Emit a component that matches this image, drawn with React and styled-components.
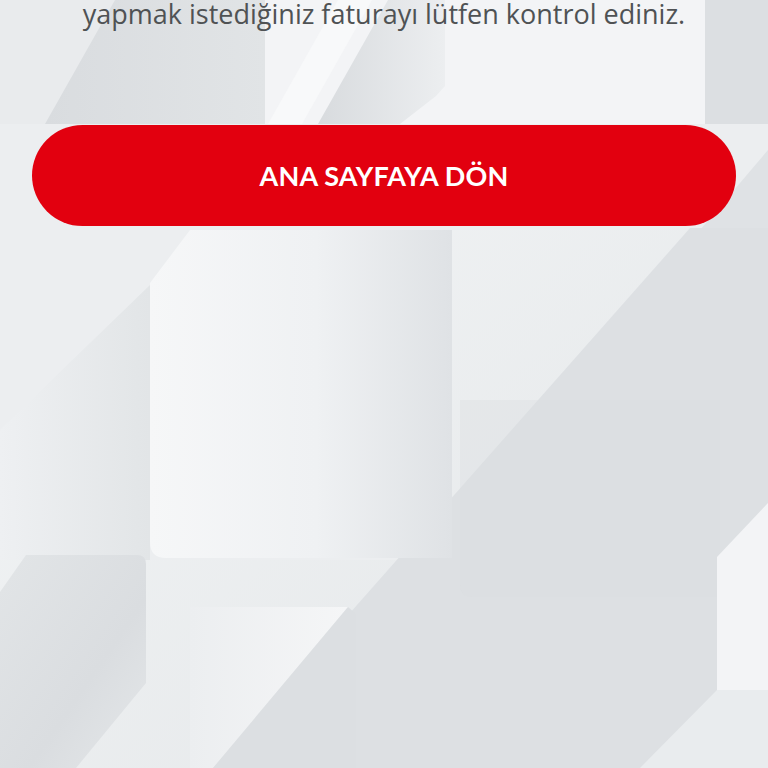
import React from "react";
import styled, { createGlobalStyle } from "styled-components";

const GlobalStyle = createGlobalStyle`
  html, body {
    margin: 0;
    padding: 0;
  }
  body {
    font-family: "Open Sans", "Liberation Sans", sans-serif;
    background: #eceef0;
  }
`;

const Page = styled.div`
  position: relative;
  min-height: 100vh;
  overflow: hidden;
  background: #eceef0;
`;

const Backdrop = styled.svg`
  position: absolute;
  inset: 0;
  width: 100%;
  height: 100%;
  z-index: 0;
`;

const Content = styled.main`
  position: relative;
  z-index: 1;
  display: flex;
  flex-direction: column;
  padding: 0 32px;
`;

const Message = styled.p`
  margin: 0;
  font-size: 27px;
  line-height: 27px;
  font-weight: 400;
  color: #4f5254;
  text-align: center;
`;

const HomeButton = styled.button`
  margin-top: 98px;
  height: 101px;
  width: 100%;
  border: none;
  border-radius: 51px;
  background: #e2000f;
  color: #ffffff;
  font-family: Lato, "Liberation Sans", sans-serif;
  font-weight: 700;
  font-size: 27px;
  letter-spacing: 0.2px;
  cursor: pointer;
`;

// decorative geometric backdrop
const Shapes = () => (
  <Backdrop viewBox="0 0 768 768" preserveAspectRatio="none">
    <defs>
      <linearGradient id="bigCard" x1="0" y1="0" x2="1" y2="0">
        <stop offset="0" stopColor="#f6f7f8" />
        <stop offset="0.55" stopColor="#eff1f3" />
        <stop offset="1" stopColor="#dfe2e5" />
      </linearGradient>
      <linearGradient id="topDark" x1="0" y1="0" x2="1" y2="0">
        <stop offset="0" stopColor="#d9dcdf" />
        <stop offset="1" stopColor="#e1e4e6" />
      </linearGradient>
      <linearGradient id="topMid" x1="0" y1="0" x2="1" y2="0">
        <stop offset="0" stopColor="#d8dbde" />
        <stop offset="1" stopColor="#eceef0" />
      </linearGradient>
      <linearGradient id="leftSlope" x1="0" y1="0" x2="1" y2="0">
        <stop offset="0" stopColor="#eef0f2" />
        <stop offset="1" stopColor="#e2e5e7" />
      </linearGradient>
      <linearGradient id="gapLight" x1="0" y1="0" x2="1" y2="1">
        <stop offset="0" stopColor="#f3f5f6" />
        <stop offset="1" stopColor="#e3e6e8" />
      </linearGradient>
      <linearGradient id="cornerCard" x1="0" y1="0" x2="1" y2="1">
        <stop offset="0" stopColor="#e2e5e7" />
        <stop offset="0.6" stopColor="#dadde0" />
        <stop offset="1" stopColor="#e4e7e9" />
      </linearGradient>
      <linearGradient id="lowCard" x1="0" y1="0" x2="1" y2="0">
        <stop offset="0" stopColor="#eceef0" />
        <stop offset="1" stopColor="#f5f6f7" />
      </linearGradient>
    </defs>

    {/* top band */}
    <rect x="0" y="0" width="265" height="124" fill="#e9ebed" />
    <polygon points="45,124 115,0 265,0 265,124" fill="url(#topDark)" />
    <rect x="265" y="0" width="440" height="124" fill="#f3f4f6" />
    <polygon points="318,124 388,0 445,0 445,86 436,96 400,124" fill="url(#topMid)" />
    <polygon points="268,124 338,0 372,0 302,124" fill="#f8f9fa" />
    <rect x="705" y="0" width="63" height="124" fill="#dcdfe2" />

    {/* around the button */}
    <rect x="0" y="124" width="768" height="106" fill="#eceef0" />
    <polygon points="700,230 768,150 768,230" fill="#dfe2e5" />

    {/* middle area */}
    <polygon points="0,430 150,285 150,560 0,560" fill="url(#leftSlope)" />
    <polygon points="452,230 690,228 213,768 0,768 0,560 452,560" fill="url(#gapLight)" />
    <polygon points="690,228 768,228 768,768 213,768" fill="#dde0e3" />
    <path d="M460 400 H720 V597 H472 Q460 597 460 585 Z" fill="#d9dcdf" opacity="0.35" />
    <path d="M150 283 L190 230 H452 V558 H166 Q150 558 150 542 Z" fill="url(#bigCard)" />

    {/* right edge pieces */}
    <path d="M768 503 V690 H717 V557 Z" fill="#f3f4f6" />
    <polygon points="768,620 768,768 640,768 717,690 768,690" fill="#e9ecee" />

    {/* bottom left card */}
    <path d="M0 592 L26 555 H137 Q146 555 146 564 V683 L76 768 H0 Z" fill="url(#cornerCard)" />

    {/* bottom middle card */}
    <path d="M190 768 V607 H348 L213 768 Z" fill="url(#lowCard)" />
    <polygon points="348,607 356,614 356,768 213,768" fill="#dcdfe2" />
  </Backdrop>
);

export default function App() {
  return (
    <>
      <GlobalStyle />
      <Page>
        <Shapes />
        <Content>
          <Message>yapmak istediğiniz faturayı lütfen kontrol ediniz.</Message>
          <HomeButton type="button">ANA SAYFAYA DÖN</HomeButton>
        </Content>
      </Page>
    </>
  );
}
